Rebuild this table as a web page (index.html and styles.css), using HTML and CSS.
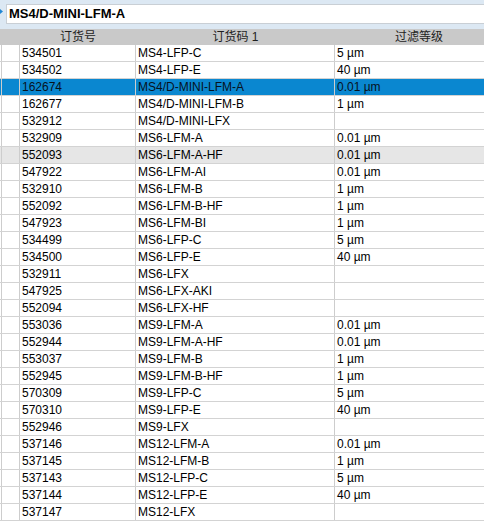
FILE: index.html
```html
<!DOCTYPE html>
<html>
<head>
<meta charset="utf-8">
<link rel="stylesheet" href="styles.css">
</head>
<body>
<div class="topbar">
  <div class="marker"><svg width="6" height="20" viewBox="0 0 6 20"><polygon points="0,5 3,7.5 0,10" fill="#1f86d4"/></svg></div>
  <div class="input">MS4/D-MINI-LFM-A</div>
</div>
<div class="grid">
  <div class="head">
    <div class="c c0"></div>
    <div class="c c1">订货号</div>
    <div class="c c2">订货码 1</div>
    <div class="c c3">过滤等级</div>
  </div>
  <div class="row"><div class="c c0"></div><div class="c c1">534501</div><div class="c c2">MS4-LFP-C</div><div class="c c3">5 µm</div></div>
  <div class="row"><div class="c c0"></div><div class="c c1">534502</div><div class="c c2">MS4-LFP-E</div><div class="c c3">40 µm</div></div>
  <div class="row sel"><div class="c c0"></div><div class="c c1">162674</div><div class="c c2">MS4/D-MINI-LFM-A</div><div class="c c3">0.01 µm</div></div>
  <div class="row"><div class="c c0"></div><div class="c c1">162677</div><div class="c c2">MS4/D-MINI-LFM-B</div><div class="c c3">1 µm</div></div>
  <div class="row"><div class="c c0"></div><div class="c c1">532912</div><div class="c c2">MS4/D-MINI-LFX</div><div class="c c3"></div></div>
  <div class="row"><div class="c c0"></div><div class="c c1">532909</div><div class="c c2">MS6-LFM-A</div><div class="c c3">0.01 µm</div></div>
  <div class="row hov"><div class="c c0"></div><div class="c c1">552093</div><div class="c c2">MS6-LFM-A-HF</div><div class="c c3">0.01 µm</div></div>
  <div class="row"><div class="c c0"></div><div class="c c1">547922</div><div class="c c2">MS6-LFM-AI</div><div class="c c3">0.01 µm</div></div>
  <div class="row"><div class="c c0"></div><div class="c c1">532910</div><div class="c c2">MS6-LFM-B</div><div class="c c3">1 µm</div></div>
  <div class="row"><div class="c c0"></div><div class="c c1">552092</div><div class="c c2">MS6-LFM-B-HF</div><div class="c c3">1 µm</div></div>
  <div class="row"><div class="c c0"></div><div class="c c1">547923</div><div class="c c2">MS6-LFM-BI</div><div class="c c3">1 µm</div></div>
  <div class="row"><div class="c c0"></div><div class="c c1">534499</div><div class="c c2">MS6-LFP-C</div><div class="c c3">5 µm</div></div>
  <div class="row"><div class="c c0"></div><div class="c c1">534500</div><div class="c c2">MS6-LFP-E</div><div class="c c3">40 µm</div></div>
  <div class="row"><div class="c c0"></div><div class="c c1">532911</div><div class="c c2">MS6-LFX</div><div class="c c3"></div></div>
  <div class="row"><div class="c c0"></div><div class="c c1">547925</div><div class="c c2">MS6-LFX-AKI</div><div class="c c3"></div></div>
  <div class="row"><div class="c c0"></div><div class="c c1">552094</div><div class="c c2">MS6-LFX-HF</div><div class="c c3"></div></div>
  <div class="row"><div class="c c0"></div><div class="c c1">553036</div><div class="c c2">MS9-LFM-A</div><div class="c c3">0.01 µm</div></div>
  <div class="row"><div class="c c0"></div><div class="c c1">552944</div><div class="c c2">MS9-LFM-A-HF</div><div class="c c3">0.01 µm</div></div>
  <div class="row"><div class="c c0"></div><div class="c c1">553037</div><div class="c c2">MS9-LFM-B</div><div class="c c3">1 µm</div></div>
  <div class="row"><div class="c c0"></div><div class="c c1">552945</div><div class="c c2">MS9-LFM-B-HF</div><div class="c c3">1 µm</div></div>
  <div class="row"><div class="c c0"></div><div class="c c1">570309</div><div class="c c2">MS9-LFP-C</div><div class="c c3">5 µm</div></div>
  <div class="row"><div class="c c0"></div><div class="c c1">570310</div><div class="c c2">MS9-LFP-E</div><div class="c c3">40 µm</div></div>
  <div class="row"><div class="c c0"></div><div class="c c1">552946</div><div class="c c2">MS9-LFX</div><div class="c c3"></div></div>
  <div class="row"><div class="c c0"></div><div class="c c1">537146</div><div class="c c2">MS12-LFM-A</div><div class="c c3">0.01 µm</div></div>
  <div class="row"><div class="c c0"></div><div class="c c1">537145</div><div class="c c2">MS12-LFM-B</div><div class="c c3">1 µm</div></div>
  <div class="row"><div class="c c0"></div><div class="c c1">537143</div><div class="c c2">MS12-LFP-C</div><div class="c c3">5 µm</div></div>
  <div class="row"><div class="c c0"></div><div class="c c1">537144</div><div class="c c2">MS12-LFP-E</div><div class="c c3">40 µm</div></div>
  <div class="row"><div class="c c0"></div><div class="c c1">537147</div><div class="c c2">MS12-LFX</div><div class="c c3"></div></div>
</div>
</body>
</html>
```
FILE: styles.css
```css
html, body {
  margin: 0;
  padding: 0;
  overflow: hidden;
  background: #ffffff;
}
body {
  font-family: "Liberation Sans", "Noto Sans CJK SC", Arial, sans-serif;
  font-size: 12px;
  color: #000;
  width: 484px;
  height: 525px;
}
.topbar {
  display: flex;
  height: 29px;
  box-sizing: border-box;
  padding: 4px 0 5px 0;
  background: #dce8f3;
}
.marker {
  width: 6px;
  height: 20px;
}
.marker svg {
  display: block;
}
.input {
  flex: 1;
  height: 20px;
  box-sizing: border-box;
  background: #fff;
  border: 1px solid #c9cfd5;
  border-right: none;
  padding-left: 2px;
  font-weight: bold;
  font-size: 13px;
  line-height: 18px;
  color: #000;
}
.grid {
  width: 503px;
}
.head, .row {
  display: grid;
  grid-template-columns: 20px 116px 199px 168px;
}
.head {
  height: 16px;
  background: #c9c9c9;
  line-height: 16px;
  color: #1e1e1e;
}
.head .c {
  text-align: center;
}
.row {
  height: 17px;
  box-sizing: border-box;
  border-bottom: 1px solid #d3d3d3;
  line-height: 16px;
}
.c {
  box-sizing: border-box;
  white-space: nowrap;
  overflow: hidden;
}
.row .c {
  border-right: 1px solid #cdcdcd;
  padding-left: 2px;
}
.row .c0 {
  margin-left: 1px;
  border-left: 1px solid #cdcdcd;
  padding-left: 0;
}
.row.sel {
  background: #0a87d0;
  color: #07121c;
}
.row.hov {
  background: #e6e6e6;
}
```
